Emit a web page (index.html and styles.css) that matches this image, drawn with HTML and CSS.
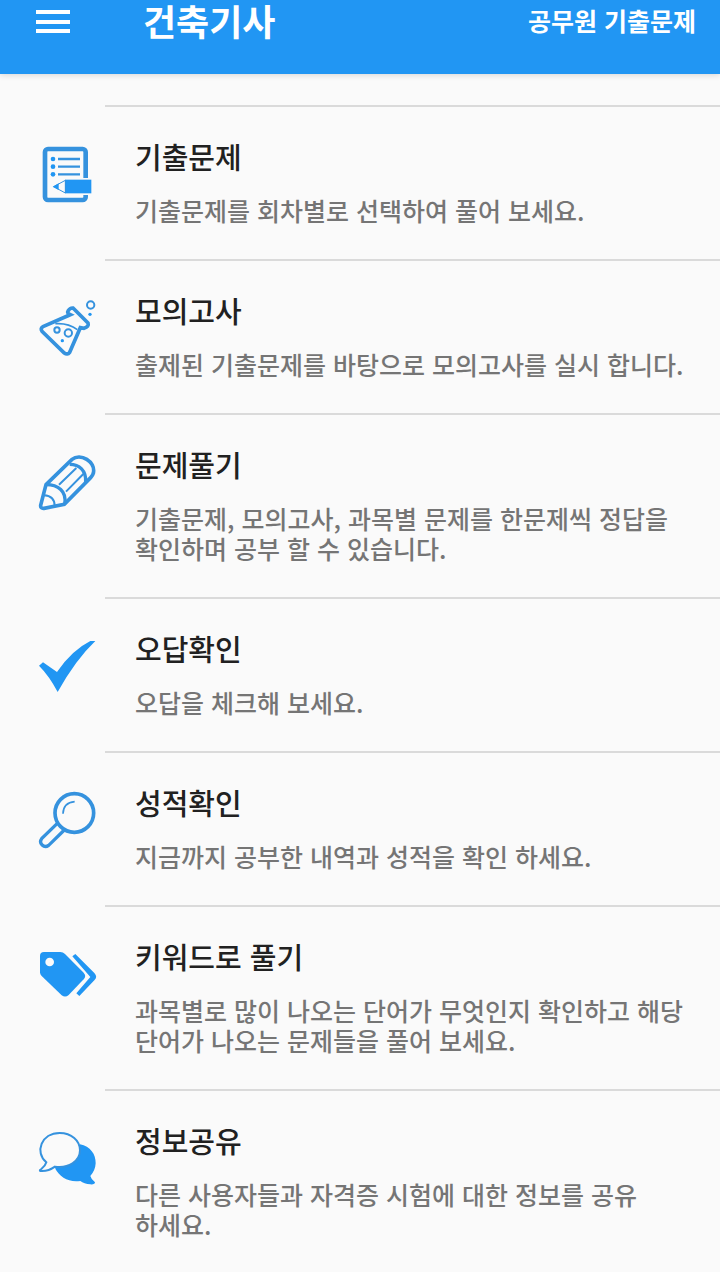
FILE: index.html
```html
<!DOCTYPE html>
<html lang="ko">
  <head>
    <meta charset="UTF-8" />
    <meta name="viewport" content="width=device-width, initial-scale=1" />
    <title>건축기사</title>
    <link rel="stylesheet" href="styles.css">
  </head>
  <body>
    <header class="app-bar">
      <button class="menu-btn" type="button" aria-label="메뉴">
        <svg width="36" height="26" viewBox="0 0 36 26">
          <path d="M1 5h34M1 15h34M1 24h34" />
        </svg>
      </button>
      <h1 class="app-title">건축기사</h1>
      <a class="app-link" href="#">공무원 기출문제</a>
    </header>

    <main>
      <ul class="menu-list">
        <li>
          <a class="menu-item" href="#">
            <!-- note with pencil -->
            <svg class="icon" viewBox="24 27 180 180">
              <rect x="45" y="42" width="122" height="153" rx="9" stroke-width="14" />
              <path d="M84 72h66M84 95h66M84 118h66" stroke-width="7" />
              <g class="fill">
                <circle cx="69" cy="72" r="7" />
                <circle cx="69" cy="95" r="7" />
                <circle cx="69" cy="118" r="7" />
              </g>
              <path class="paper" d="M64 155L104 129H176V180H104Z" />
              <path class="fill" d="M105 134H184V175H105Z" />
              <path d="M71 155L106 136V174Z" stroke-width="3" />
              <path class="fill" d="M68 155L86 145V165Z" />
            </svg>
            <div class="menu-text">
              <h2>기출문제</h2>
              <p>기출문제를 회차별로 선택하여 풀어 보세요.</p>
            </div>
          </a>
        </li>
        <li>
          <a class="menu-item" href="#">
            <!-- flask -->
            <svg class="icon" viewBox="24 24 180 180">
              <path d="M112 78L39 110Q30 115 36 124L103 189Q112 196 119 187L151 113L162 115Q178 110 174 99L129 54Q120 53 114 63Q110 69 121 74Z" stroke-width="11" />
              <path d="M76 101Q114 98 142 119" stroke-width="5" />
              <circle cx="81" cy="120" r="8" stroke-width="6" />
              <circle cx="115" cy="129" r="11" stroke-width="6" />
              <circle cx="182" cy="45" r="11" stroke-width="6" />
              <circle class="fill" cx="97" cy="152" r="5" />
              <circle class="fill" cx="180" cy="73" r="5" />
            </svg>
            <div class="menu-text">
              <h2>모의고사</h2>
              <p>출제된 기출문제를 바탕으로 모의고사를 실시 합니다.</p>
            </div>
          </a>
        </li>
        <li>
          <a class="menu-item" href="#">
            <!-- pencil -->
            <svg class="icon" viewBox="24 21 180 180">
              <path d="M48 119L126 43C151 23 198 49 190 85Q188 92 182 98L103 178L42 190Q31 191 32 181Z" stroke-width="11" />
              <path d="M48 119C84 119 111 139 104 177M119 58C148 58 169 77 167 111" stroke-width="10" />
              <path d="M87 119L139 69M108 140L160 87M42 151Q74 153 74 183" stroke-width="6" />
            </svg>
            <div class="menu-text">
              <h2>문제풀기</h2>
              <p>기출문제, 모의고사, 과목별 문제를 한문제씩 정답을 확인하며 공부 할 수 있습니다.</p>
            </div>
          </a>
        </li>
        <li>
          <a class="menu-item" href="#">
            <!-- check mark -->
            <svg class="icon" viewBox="24 18 180 180">
              <path class="fill" d="M27 107L39 97L81 126Q125 61 181 33H196Q137 89 83 186Q58 138 27 107Z" />
            </svg>
            <div class="menu-text">
              <h2>오답확인</h2>
              <p>오답을 체크해 보세요.</p>
            </div>
          </a>
        </li>
        <li>
          <a class="menu-item" href="#">
            <!-- magnifier -->
            <svg class="icon" viewBox="24 24 180 180">
              <circle cx="133" cy="93" r="58" stroke-width="11" />
              <path d="M82 124L35 170C25 184 42 200 56 190L103 144" stroke-width="10" />
              <path d="M99 95Q100 62 134 59" stroke-width="5" />
            </svg>
            <div class="menu-text">
              <h2>성적확인</h2>
              <p>지금까지 공부한 내역과 성적을 확인 하세요.</p>
            </div>
          </a>
        </li>
        <li>
          <a class="menu-item" href="#">
            <!-- tags -->
            <svg class="icon" viewBox="24 12 180 180">
              <path class="fill" d="M42 36H91Q99 36 105 42L161 98Q170 108 161 118L116 165Q106 174 95 166L35 108Q30 103 30 97V48Q30 36 42 36Z" />
              <circle class="paper" cx="59" cy="66" r="13" />
              <path class="fill" d="M127 49L136 42L193 99Q204 111 193 121L148 168L139 160L181 111Z" />
            </svg>
            <div class="menu-text">
              <h2>키워드로 풀기</h2>
              <p>과목별로 많이 나오는 단어가 무엇인지 확인하고 해당 단어가 나오는 문제들을 풀어 보세요.</p>
            </div>
          </a>
        </li>
        <li>
          <a class="menu-item" href="#">
            <!-- speech bubbles -->
            <svg class="icon" viewBox="24 24 180 180">
              <path class="fill" d="M150 73C181 79 198 103 197 130Q196 151 181 168Q184 179 195 187Q195 194 181 193Q162 192 151 183C116 188 89 172 75 145Q151 137 150 73Z" />
              <path class="bubble" d="M89 39C124 39 150 61 150 91C150 124 115 146 75 140Q54 155 31 153Q27 151 34 147Q46 138 49 127C13 97 34 39 89 39Z" stroke-width="6" />
            </svg>
            <div class="menu-text">
              <h2>정보공유</h2>
              <p>다른 사용자들과 자격증 시험에 대한 정보를 공유 하세요.</p>
            </div>
          </a>
        </li>
      </ul>
    </main>
  </body>
</html>
```

FILE: styles.css
```css
* {
  box-sizing: border-box;
}
body {
  margin: 0;
  background: #fafafa;
  color: #212121;
  font-family: "Noto Sans CJK KR", "Noto Sans", sans-serif;
  word-break: keep-all;
}
h1,
h2,
p,
ul {
  margin: 0;
  padding: 0;
}
a {
  color: inherit;
  text-decoration: none;
}
.app-bar {
  display: flex;
  align-items: center;
  padding: 0 24px 34px 35px;
  background: #2196f3;
  color: white;
  line-height: 40px;
  box-shadow: 0 1px 6px rgba(0, 0, 0, 0.15);
}
.menu-btn {
  display: flex;
  padding: 0;
  margin-right: 72px;
  border: none;
  background: none;
  cursor: pointer;
}
.menu-btn svg {
  stroke: white;
  stroke-width: 4;
}
.app-title {
  flex-grow: 1;
  font-size: 36px;
  font-weight: 700;
}
.app-link {
  font-size: 25px;
  font-weight: 700;
}
main {
  padding-top: 31px;
}
.menu-list {
  list-style: none;
}
.menu-item {
  display: flex;
  align-items: flex-start;
}
.icon {
  flex-shrink: 0;
  width: 60px;
  height: 60px;
  margin: 39px 7px 0 38px;
  fill: none;
  stroke: #3592de;
}
.icon .fill {
  fill: #2196f3;
  stroke: none;
}
.icon .paper {
  fill: #fafafa;
  stroke: none;
}
.icon .bubble {
  fill: #fafafa;
}
.menu-text {
  flex-grow: 1;
  padding: 30px 30px 34px;
  border-top: 2px solid #dadada;
}
.menu-text h2 {
  margin-bottom: 20px;
  font-size: 29px;
  font-weight: 500;
  line-height: 38px;
}
.menu-text p {
  color: #757575;
  font-size: 25px;
  font-weight: 500;
  line-height: 30px;
}
```
